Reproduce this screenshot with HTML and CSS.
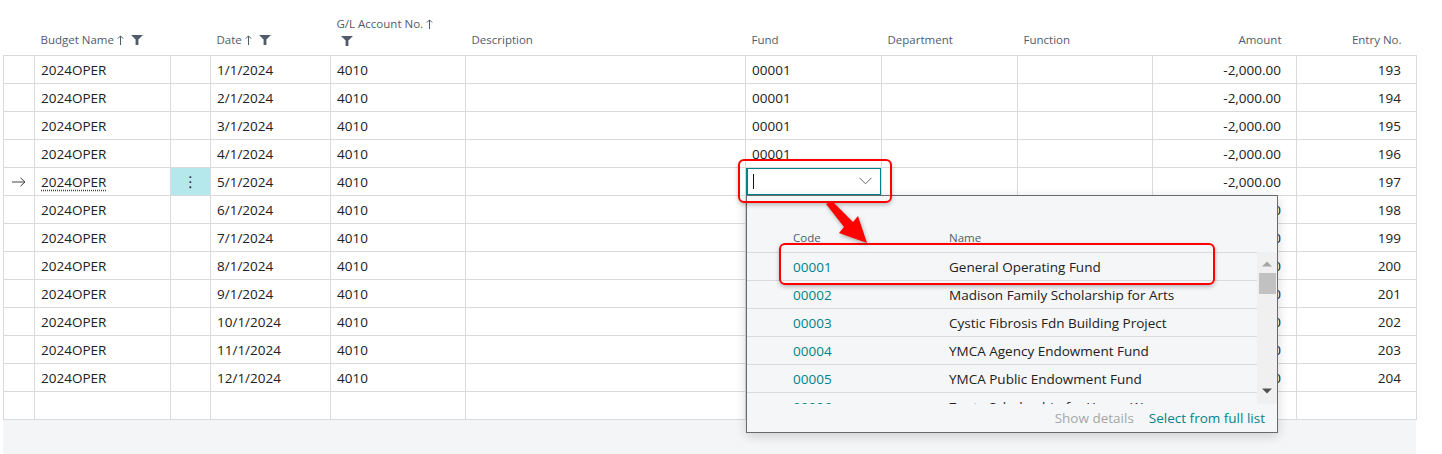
FILE: index.html
```html
<!DOCTYPE html>
<html lang="en">

<head>
    <meta charset="UTF-8">
    <title>Budget Entries</title>
    <link rel="stylesheet" href="styles.css">
</head>

<body>
    <div class="page">
        <div class="list">
            <table class="grid">
                <colgroup>
                    <col class="w-mark">
                    <col class="w-budget">
                    <col class="w-menu">
                    <col class="w-date">
                    <col class="w-account">
                    <col class="w-desc">
                    <col class="w-fund">
                    <col class="w-dept">
                    <col class="w-func">
                    <col class="w-amount">
                    <col class="w-entry">
                </colgroup>
                <thead>
                    <tr>
                        <th></th>
                        <th>Budget Name<span class="sort"><svg width="7" height="10" viewBox="0 0 7 10"><path d="M3.5 1V10M0.8 3.6L3.5 0.9L6.2 3.6" fill="none" stroke="#505c6d" stroke-width="1"/></svg></span><span class="funnel"><svg width="12" height="10" viewBox="0 0 12 10"><path d="M0 0H12L7.4 4.6V10H4.6V4.6Z" fill="#505c6d"/></svg></span></th>
                        <th></th>
                        <th>Date<span class="sort"><svg width="7" height="10" viewBox="0 0 7 10"><path d="M3.5 1V10M0.8 3.6L3.5 0.9L6.2 3.6" fill="none" stroke="#505c6d" stroke-width="1"/></svg></span><span class="funnel"><svg width="12" height="10" viewBox="0 0 12 10"><path d="M0 0H12L7.4 4.6V10H4.6V4.6Z" fill="#505c6d"/></svg></span></th>
                        <th>
                            <div>G/L Account No.<span class="sort"><svg width="7" height="10" viewBox="0 0 7 10"><path d="M3.5 1V10M0.8 3.6L3.5 0.9L6.2 3.6" fill="none" stroke="#505c6d" stroke-width="1"/></svg></span></div>
                            <div class="funnel-line"><svg width="12" height="10" viewBox="0 0 12 10"><path d="M0 0H12L7.4 4.6V10H4.6V4.6Z" fill="#505c6d"/></svg></div>
                        </th>
                        <th>Description</th>
                        <th>Fund</th>
                        <th>Department</th>
                        <th>Function</th>
                        <th class="num">Amount</th>
                        <th class="num">Entry No.</th>
                    </tr>
                </thead>
                <tbody>
                    <tr><td></td><td>2024OPER</td><td></td><td>1/1/2024</td><td>4010</td><td></td><td>00001</td><td></td><td></td><td class="num">-2,000.00</td><td class="num">193</td></tr>
                    <tr><td></td><td>2024OPER</td><td></td><td>2/1/2024</td><td>4010</td><td></td><td>00001</td><td></td><td></td><td class="num">-2,000.00</td><td class="num">194</td></tr>
                    <tr><td></td><td>2024OPER</td><td></td><td>3/1/2024</td><td>4010</td><td></td><td>00001</td><td></td><td></td><td class="num">-2,000.00</td><td class="num">195</td></tr>
                    <tr><td></td><td>2024OPER</td><td></td><td>4/1/2024</td><td>4010</td><td></td><td>00001</td><td></td><td></td><td class="num">-2,000.00</td><td class="num">196</td></tr>
                    <tr class="current">
                        <td class="mark"><svg width="14" height="10" viewBox="0 0 14 10"><path d="M0 5H13M8.5 0.8L13 5L8.5 9.2" fill="none" stroke="#444" stroke-width="1"/></svg></td>
                        <td><span class="dotted">2024OPER</span></td>
                        <td class="menu-cell">&#8942;</td>
                        <td>5/1/2024</td>
                        <td>4010</td>
                        <td></td>
                        <td class="edit-cell">
                            <div class="lookup-input">
                                <span class="caret"></span>
                                <svg class="chev" width="13" height="8" viewBox="0 0 13 8"><path d="M0.5 0.8L6.5 6.8L12.5 0.8" fill="none" stroke="#666" stroke-width="1"/></svg>
                            </div>
                        </td>
                        <td></td><td></td><td class="num">-2,000.00</td><td class="num">197</td>
                    </tr>
                    <tr><td></td><td>2024OPER</td><td></td><td>6/1/2024</td><td>4010</td><td></td><td>00001</td><td></td><td></td><td class="num">-2,000.00</td><td class="num">198</td></tr>
                    <tr><td></td><td>2024OPER</td><td></td><td>7/1/2024</td><td>4010</td><td></td><td>00001</td><td></td><td></td><td class="num">-2,000.00</td><td class="num">199</td></tr>
                    <tr><td></td><td>2024OPER</td><td></td><td>8/1/2024</td><td>4010</td><td></td><td>00001</td><td></td><td></td><td class="num">-2,000.00</td><td class="num">200</td></tr>
                    <tr><td></td><td>2024OPER</td><td></td><td>9/1/2024</td><td>4010</td><td></td><td>00001</td><td></td><td></td><td class="num">-2,000.00</td><td class="num">201</td></tr>
                    <tr><td></td><td>2024OPER</td><td></td><td>10/1/2024</td><td>4010</td><td></td><td>00001</td><td></td><td></td><td class="num">-2,000.00</td><td class="num">202</td></tr>
                    <tr><td></td><td>2024OPER</td><td></td><td>11/1/2024</td><td>4010</td><td></td><td>00001</td><td></td><td></td><td class="num">-2,000.00</td><td class="num">203</td></tr>
                    <tr><td></td><td>2024OPER</td><td></td><td>12/1/2024</td><td>4010</td><td></td><td>00001</td><td></td><td></td><td class="num">-2,000.00</td><td class="num">204</td></tr>
                    <tr><td></td><td></td><td></td><td></td><td></td><td></td><td></td><td></td><td></td><td></td><td></td></tr>
                </tbody>
            </table>
            <div class="list-foot"></div>
        </div>

        <!-- Lookup dropdown for Fund -->
        <div class="lookup">
            <div class="lookup-head">
                <span>Code</span>
                <span>Name</span>
            </div>
            <div class="lookup-body">
                <div class="lookup-rows">
                    <div class="lookup-row"><span class="code">00001</span><span>General Operating Fund</span></div>
                    <div class="lookup-row"><span class="code">00002</span><span>Madison Family Scholarship for Arts</span></div>
                    <div class="lookup-row"><span class="code">00003</span><span>Cystic Fibrosis Fdn Building Project</span></div>
                    <div class="lookup-row"><span class="code">00004</span><span>YMCA Agency Endowment Fund</span></div>
                    <div class="lookup-row"><span class="code">00005</span><span>YMCA Public Endowment Fund</span></div>
                    <div class="lookup-row"><span class="code">00006</span><span>Zonta Scholarship for Young Women</span></div>
                </div>
                <div class="scroll">
                    <svg width="20" height="152" viewBox="0 0 20 152">
                        <path d="M5 14.5H15L10 9.5Z" fill="#a6a6a6"/>
                        <rect x="2" y="21" width="17" height="21" fill="#c1c1c1"/>
                        <path d="M5 136.5H15L10 141.5Z" fill="#505050"/>
                    </svg>
                </div>
            </div>
            <div class="lookup-foot">
                <span class="muted">Show details</span>
                <span class="link">Select from full list</span>
            </div>
        </div>

        <!-- Annotations -->
        <div class="callout callout-input"></div>
        <div class="callout callout-row"></div>
        <svg class="callout-arrow" width="55" height="52" viewBox="0 0 55 52">
            <path d="M6 8L12 5L33 26L38 20L47 47L19 37L24 31Z" fill="#f00"/>
        </svg>
    </div>
</body>

</html>
```

FILE: styles.css
```css
body {
    margin: 0;
    background: #fff;
    font-family: "Segoe UI", "Open Sans", sans-serif;
    color: #212121;
}

.page {
    position: relative;
    width: 1442px;
    height: 454px;
    overflow: hidden;
}

/* Grid list */
.list {
    margin-left: 3px;
    width: 1413px;
}

.grid {
    border-collapse: collapse;
    table-layout: fixed;
    width: 1413px;
}

.w-mark { width: 31px; }
.w-budget { width: 136px; }
.w-menu { width: 40px; }
.w-date { width: 120px; }
.w-account { width: 135px; }
.w-desc { width: 280px; }
.w-fund { width: 136px; }
.w-dept { width: 136px; }
.w-func { width: 135px; }
.w-amount { width: 144px; }
.w-entry { width: 120px; }

.grid th {
    height: 55px;
    padding: 0 6px 7px;
    box-sizing: border-box;
    vertical-align: bottom;
    text-align: left;
    font-weight: normal;
    font-size: 11.5px;
    line-height: 16px;
    color: #505c6d;
    white-space: nowrap;
}

.grid th.num,
.grid td.num {
    text-align: right;
    padding-right: 15px;
}

.sort {
    margin-left: 3px;
}

.sort svg,
.funnel svg {
    vertical-align: -1px;
}

.funnel {
    margin-left: 7px;
}

.funnel-line {
    height: 16px;
    padding-left: 4px;
}

.funnel-line svg {
    vertical-align: -2px;
}

.grid tbody tr {
    height: 28px;
}

.grid td {
    padding: 1px 6px 0;
    border: 1px solid #d9d9de;
    font-size: 13.5px;
    line-height: 18px;
    white-space: nowrap;
    overflow: hidden;
}

.list-foot {
    height: 40px;
    background: #f4f5f7;
}

/* Current row */
.mark {
    text-align: center;
}

.mark svg {
    display: block;
    margin: 0 auto;
}

.dotted {
    text-decoration: underline dotted #444;
    text-underline-offset: 3px;
}

.grid td.menu-cell {
    background: #b4e8ec;
    text-align: center;
    font-family: "DejaVu Sans", sans-serif;
    font-size: 15px;
    color: #333;
}

.grid td.edit-cell {
    padding: 0;
    position: relative;
}

.lookup-input {
    height: 27px;
    box-sizing: border-box;
    border: 1px solid #00848a;
    border-left-width: 2px;
    background: #fff;
    display: flex;
    align-items: center;
    justify-content: space-between;
    padding: 0 8px 0 5px;
}

.caret {
    width: 1px;
    height: 15px;
    background: #111;
}

/* Lookup dropdown */
.lookup {
    position: absolute;
    left: 746px;
    top: 195px;
    width: 532px;
    height: 238px;
    box-sizing: border-box;
    border: 1px solid #6a6a6a;
    background: #f5f6f7;
    box-shadow: 0 3px 10px rgba(0, 0, 0, 0.16);
    font-size: 13.5px;
}

.lookup-head {
    height: 57px;
    box-sizing: border-box;
    border-bottom: 1px solid #d9d9de;
    display: grid;
    grid-template-columns: 156px 1fr;
    align-items: end;
    padding: 0 0 6px 46px;
    font-size: 11.5px;
    line-height: 16px;
    color: #505c6d;
}

.lookup-body {
    display: flex;
    height: 151px;
}

.lookup-rows {
    flex: 1;
    overflow: hidden;
}

.lookup-row {
    height: 28px;
    box-sizing: border-box;
    border-bottom: 1px solid #d9d9de;
    display: grid;
    grid-template-columns: 156px 1fr;
    align-items: center;
    padding: 1px 0 0 46px;
    white-space: nowrap;
}

.lookup-row .code {
    color: #00838a;
}

.scroll {
    width: 20px;
    height: 152px;
    margin-top: -1px;
    background: #f0f0f0;
}

.scroll svg {
    display: block;
}

.lookup-foot {
    height: 28px;
    display: flex;
    justify-content: flex-end;
    align-items: center;
    gap: 15px;
    padding-right: 12px;
}

.muted {
    color: #a6a6a6;
}

.link {
    color: #00838a;
}

/* Red annotations */
.callout {
    position: absolute;
    box-sizing: border-box;
    border: 2px solid #f00;
    border-radius: 6px;
    box-shadow: 0 2px 4px rgba(0, 0, 0, 0.25);
}

.callout-input {
    left: 738px;
    top: 159px;
    width: 154px;
    height: 44px;
}

.callout-row {
    left: 779px;
    top: 243px;
    width: 436px;
    height: 42px;
}

.callout-arrow {
    position: absolute;
    left: 820px;
    top: 196px;
    filter: drop-shadow(1px 2px 2px rgba(0, 0, 0, 0.3));
}
```
